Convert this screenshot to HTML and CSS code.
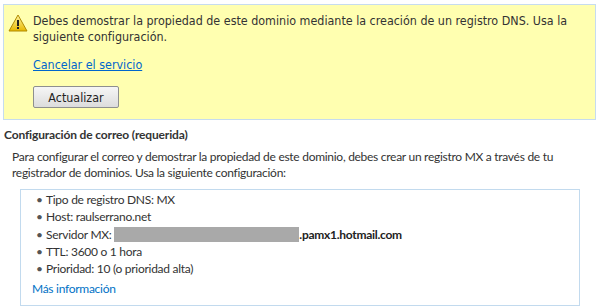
FILE: index.html
```html
<!DOCTYPE html>
<html lang="es">
<head>
  <meta charset="UTF-8" />
  <title>Dominio</title>
  <link rel="stylesheet" href="styles.css">
</head>
<body>

<div class="notice">
  <svg class="warn-icon" width="20" height="18" viewBox="0 0 20 18">
    <defs>
      <linearGradient id="wg" x1="0" y1="0" x2="0" y2="1">
        <stop offset="0" stop-color="#fff6a0"/>
        <stop offset="1" stop-color="#e8b800"/>
      </linearGradient>
    </defs>
    <path d="M10 1 L19 17 L1 17 Z" fill="url(#wg)" stroke="#b08a00" stroke-width="1" stroke-linejoin="round"/>
    <rect x="9" y="6" width="2" height="6" fill="#222"/>
    <rect x="9" y="13" width="2" height="2" fill="#222"/>
  </svg>
  <div class="notice-body">
    <p class="notice-text">Debes demostrar la propiedad de este dominio mediante la creación de un registro DNS. Usa la siguiente configuración.</p>
    <a class="notice-link" href="#">Cancelar el servicio</a>
    <button class="btn">Actualizar</button>
  </div>
</div>

<h2 class="section-title">Configuración de correo (requerida)</h2>
<p class="section-text">Para configurar el correo y demostrar la propiedad de este dominio, debes crear un registro MX a través de tu registrador de dominios. Usa la siguiente configuración:</p>

<div class="record-box">
  <ul class="record-list">
    <li>Tipo de registro DNS: MX</li>
    <li>Host: raulserrano.net</li>
    <li>Servidor MX: <span class="redacted"></span><b>.pamx1.hotmail.com</b></li>
    <li>TTL: 3600 o 1 hora</li>
    <li>Prioridad: 10 (o prioridad alta)</li>
  </ul>
  <a class="more-link" href="#">Más información</a>
</div>

</body>
</html>
```

FILE: styles.css
```css
* { box-sizing: border-box; }
body {
  margin: 0;
  padding: 4px 4px 0 3px;
  background: #fff;
  color: #333;
}
.notice {
  display: flex;
  gap: 5px;
  width: 593px;
  height: 116px;
  padding: 8px 8px 0 4px;
  background: #ffffb0;
  border: 1px solid #c6dcef;
}
.warn-icon { flex: none; margin-top: 1px; }
.notice-body {
  font-family: 'DejaVu Sans Condensed', 'DejaVu Sans', sans-serif;
  font-size: 12.4px;
  color: #333;
}
.notice-text {
  margin: 0;
  line-height: 16px;
}
.notice-link {
  display: block;
  margin-top: 12px;
  color: #0066cc;
  line-height: 16px;
}
.btn {
  display: block;
  margin-top: 13px;
  width: 86px;
  height: 22px;
  padding: 0;
  font-family: inherit;
  font-size: 12.4px;
  color: #222;
  background: linear-gradient(#f6f6f6, #dcdcdc);
  border: 1px solid #8e8f8f;
  border-radius: 2px;
}
.section-title {
  margin: 7px 0 0 1px;
  font-family: Lato, sans-serif;
  font-size: 12px;
  letter-spacing: -0.15px;
  font-weight: bold;
  color: #333;
  line-height: 16px;
}
.section-text {
  margin: 6px 0 0 9px;
  width: 560px;
  font-family: Lato, sans-serif;
  font-size: 12px;
  letter-spacing: -0.28px;
  line-height: 16px;
  color: #333;
}
.record-box {
  margin: 8px 0 0 17px;
  width: 560px;
  height: 117px;
  padding: 1px 0 0 11px;
  border: 1px solid #c2daee;
  font-family: Lato, sans-serif;
  font-size: 12px;
  letter-spacing: -0.28px;
  color: #333;
}
.record-list {
  margin: 0;
  padding: 0 0 0 14px;
  list-style: none;
}
.record-list li {
  height: 17.3px;
  line-height: 17.3px;
}
.record-list li::before {
  content: "•";
  display: inline-block;
  width: 10px;
  margin-left: -10px;
  color: #555;
}
.redacted {
  display: inline-block;
  width: 185px;
  height: 15px;
  vertical-align: -3px;
  background: #a9a9a9;
}
.record-list b { color: #222; }
.more-link {
  display: block;
  margin-top: 3px;
  color: #0072c6;
  text-decoration: none;
  line-height: 17px;
}
```
